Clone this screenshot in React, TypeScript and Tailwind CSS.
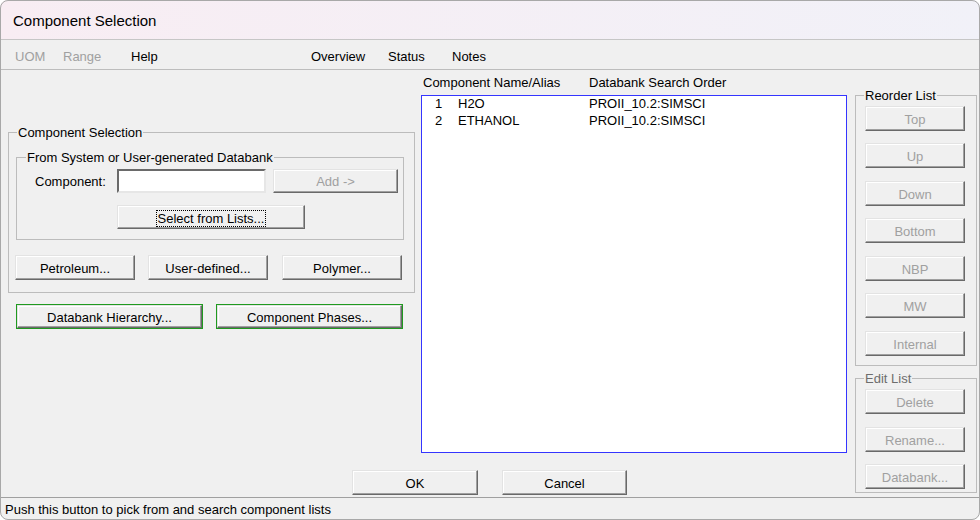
import React from 'react';

const btn3d =
  'flex items-center justify-center flex-none pt-[2px] bg-[#f0f0f0] border border-t-[#e3e3e3] border-l-[#e3e3e3] border-r-[#696969] border-b-[#696969] shadow-[inset_-1px_-1px_0_#a0a0a0,inset_1px_1px_0_#ffffff]';

const Btn: React.FC<{ className?: string; disabled?: boolean; children: React.ReactNode }> = ({
  className = '',
  disabled,
  children,
}) => (
  <div className={`${btn3d} ${disabled ? 'text-[#a0a0a0]' : 'text-black'} ${className}`}>{children}</div>
);

const GreenBtn: React.FC<{ className?: string; children: React.ReactNode }> = ({ className = '', children }) => (
  <div className={`flex-none border border-[#1f9a1f] ${className}`}>
    <div className={`${btn3d} w-full h-full`}>{children}</div>
  </div>
);

// group box caption, nudged a pixel down to sit like the dialog font does
const Caption: React.FC<{ className?: string; children: React.ReactNode }> = ({ className = '', children }) => (
  <legend className={`px-[1px] leading-[16px] ${className}`}>
    <span className="relative top-[1px]">{children}</span>
  </legend>
);

const rows = [
  { n: '1', name: 'H2O', db: 'PROII_10.2:SIMSCI' },
  { n: '2', name: 'ETHANOL', db: 'PROII_10.2:SIMSCI' },
];

const reorder = ['Top', 'Up', 'Down', 'Bottom', 'NBP', 'MW', 'Internal'];
const reorderGaps = ['mt-0', 'mt-[12px]', 'mt-[13px]', 'mt-[12px]', 'mt-[13px]', 'mt-[12px]', 'mt-[13px]'];

export default function App() {
  return (
    <div className="relative w-[980px] h-[520px] overflow-hidden bg-white font-['Liberation_Sans',Arial,sans-serif] text-[13px] text-black">
      <div className="w-full h-full flex flex-col bg-[#f0f0f0] rounded-[8px] overflow-hidden">
        {/* Title bar */}
        <div className="h-[40px] flex-none flex items-center pt-[4px] pl-[13px] border-b border-[#c6c6c6] bg-linear-to-r from-[#f8edf3] to-[#f1f1f8] text-[15px]">
          Component Selection
        </div>

        {/* Menu bar */}
        <div className="h-[30px] flex-none flex items-center pt-[4px] pl-[15px] border-b border-[#bdbdbd] text-[13px]">
          <span className="w-[48px] text-[#a0a0a0]">UOM</span>
          <span className="w-[68px] text-[#a0a0a0]">Range</span>
          <span className="w-[180px]">Help</span>
          <span className="w-[77px]">Overview</span>
          <span className="w-[64px]">Status</span>
          <span>Notes</span>
        </div>

        {/* Body */}
        <div className="h-[427px] flex-none flex items-start">
          <div className="w-[853px] flex-none flex flex-col">
            <div className="flex items-start">
              {/* Left panel */}
              <div className="w-[421px] flex-none pt-[54px] pl-[8px]">
                <fieldset className="w-[407px] m-0 p-0 border border-[#bcbcbc]">
                  <Caption className="ml-[8px]">Component Selection</Caption>
                  <div className="pl-[7px] pt-[9px] pb-[12px]">
                    <fieldset className="w-[388px] m-0 p-0 border border-[#bcbcbc]">
                      <Caption className="ml-[9px]">From System or User-generated Databank</Caption>
                      <div className="pt-[4px] pb-[10px]">
                        <div className="flex items-center h-[24px]">
                          <span className="w-[100px] pl-[18px] pt-[2px]">Component:</span>
                          <div className="w-[149px] h-[24px] bg-white border-2 border-t-[#6a6a6a] border-l-[#6a6a6a] border-r-[#e6e6e6] border-b-[#e6e6e6]" />
                          <Btn disabled className="ml-[7px] w-[125px] h-[24px]">
                            Add -&gt;
                          </Btn>
                        </div>
                        <div className="mt-[12px] ml-[100px]">
                          <Btn className="w-[188px] h-[24px]">
                            <span className="px-[1px] leading-[15px] outline-1 outline-dotted outline-black">
                              Select from Lists...
                            </span>
                          </Btn>
                        </div>
                      </div>
                    </fieldset>
                    <div className="flex mt-[15px] ml-[-1px]">
                      <Btn className="w-[120px] h-[25px]">Petroleum...</Btn>
                      <Btn className="ml-[13px] w-[120px] h-[25px]">User-defined...</Btn>
                      <Btn className="ml-[14px] w-[120px] h-[25px]">Polymer...</Btn>
                    </div>
                  </div>
                </fieldset>
                <div className="flex mt-[11px] ml-[8px]">
                  <GreenBtn className="w-[187px] h-[25px]">Databank Hierarchy...</GreenBtn>
                  <GreenBtn className="ml-[13px] w-[187px] h-[25px]">Component Phases...</GreenBtn>
                </div>
              </div>

              {/* Component list */}
              <div className="w-[426px] flex-none">
                <div className="h-[25px] flex items-center">
                  <span className="w-[168px] pl-[2px]">Component Name/Alias</span>
                  <span>Databank Search Order</span>
                </div>
                <div className="h-[358px] bg-white border border-[#3535ff]">
                  {rows.map((r) => (
                    <div key={r.n} className="h-[16px] flex items-center first:h-[16px] [&+&]:h-[17px] [&+&]:pt-[1px]">
                      <span className="w-[36px] pl-[13px]">{r.n}</span>
                      <span className="w-[131px]">{r.name}</span>
                      <span>{r.db}</span>
                    </div>
                  ))}
                </div>
              </div>
            </div>

            {/* OK / Cancel */}
            <div className="flex mt-[17px] pl-[352px]">
              <Btn className="w-[126px] h-[25px]">OK</Btn>
              <Btn className="ml-[24px] w-[125px] h-[25px]">Cancel</Btn>
            </div>
          </div>

          {/* Right column */}
          <div className="w-[127px] flex-none pt-[17px] pl-[2px]">
            <fieldset className="w-[122px] m-0 p-0 border border-[#bcbcbc]">
              <Caption className="ml-[8px]">Reorder List</Caption>
              <div className="pl-[9px] pt-[3px] pb-[9px] flex flex-col">
                {reorder.map((t, i) => (
                  <Btn key={t} disabled className={`${reorderGaps[i]} w-[100px] h-[25px]`}>
                    {t}
                  </Btn>
                ))}
              </div>
            </fieldset>
            <fieldset className="mt-[4px] w-[122px] m-0 p-0 border border-[#bcbcbc]">
              <Caption className="ml-[8px] text-[#6d6d6d]">Edit List</Caption>
              <div className="pl-[9px] pt-[3px] pb-[3px] flex flex-col">
                <Btn disabled className="w-[100px] h-[25px]">Delete</Btn>
                <Btn disabled className="mt-[13px] w-[100px] h-[25px]">Rename...</Btn>
                <Btn disabled className="mt-[12px] w-[100px] h-[25px]">Databank...</Btn>
              </div>
            </fieldset>
          </div>
        </div>

        {/* Status bar */}
        <div className="h-[23px] flex-none flex items-center pt-[2px] pl-[5px] border-t border-[#a0a0a0]">
          Push this button to pick from and search component lists
        </div>
      </div>
      <div className="absolute inset-0 rounded-[8px] border border-[#a8a8a8] pointer-events-none" />
    </div>
  );
}
